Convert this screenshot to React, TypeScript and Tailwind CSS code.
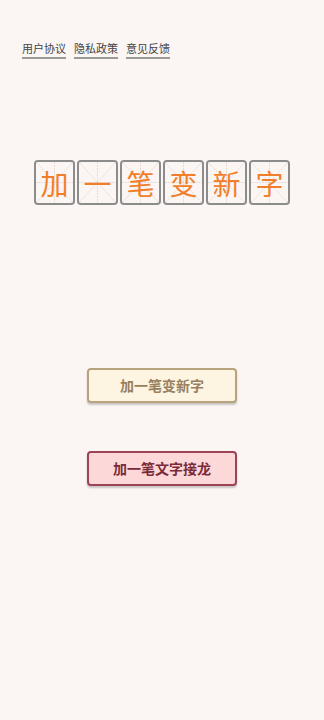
import React from 'react';

const title = ['加', '一', '笔', '变', '新', '字'];

function Cell({ ch }: { ch: string }) {
  return (
    <div className="relative w-[41px] h-[45px] rounded-[4px] border-2 border-[#8c8c8c] bg-[#fbf6f3] flex items-center justify-center">
      <svg className="absolute inset-0 w-full h-full" viewBox="0 0 40 40" preserveAspectRatio="none">
        <line x1="0" y1="0" x2="40" y2="40" stroke="#e2d2ce" strokeWidth="0.8" strokeDasharray="2 1" />
        <line x1="40" y1="0" x2="0" y2="40" stroke="#e2d2ce" strokeWidth="0.8" strokeDasharray="2 1" />
        <line x1="20" y1="0" x2="20" y2="40" stroke="#e2d2ce" strokeWidth="0.8" strokeDasharray="2 1" />
        <line x1="0" y1="20" x2="40" y2="20" stroke="#e2d2ce" strokeWidth="0.8" strokeDasharray="2 1" />
      </svg>
      <span className="relative text-[28px] font-normal leading-none text-[#f07f2c]">{ch}</span>
    </div>
  );
}

export default function App() {
  return (
    <div
      className="w-[324px] h-[720px] bg-[#fbf6f4] flex flex-col"
      style={{ fontFamily: '"Noto Sans CJK SC", "Noto Sans", sans-serif' }}
    >
      <div className="flex gap-[8px] pl-[22px] pt-[41px] text-[11px] text-[#444] leading-[15px]">
        {['用户协议', '隐私政策', '意见反馈'].map((t) => (
          <span key={t} className="border-b-2 border-[#9a9a9a] pb-[1px]">
            {t}
          </span>
        ))}
      </div>

      <div className="flex gap-[2px] pl-[34px] mt-[101px]">
        {title.map((c, i) => (
          <Cell key={i} ch={c} />
        ))}
      </div>

      <div className="flex flex-col items-center mt-[163px] gap-[48px]">
        <button className="w-[150px] h-[35px] rounded-[4px] border-2 border-[#b9a27e] bg-[#fdf5e2] text-[14px] font-semibold text-[#98805e] shadow-[0_2px_2px_rgba(0,0,0,0.2)]">
          加一笔变新字
        </button>
        <button className="w-[150px] h-[35px] rounded-[4px] border-2 border-[#9c4455] bg-[#fcd8d8] text-[14px] font-semibold text-[#7a2a3a] shadow-[0_2px_2px_rgba(0,0,0,0.2)]">
          加一笔文字接龙
        </button>
      </div>
    </div>
  );
}
